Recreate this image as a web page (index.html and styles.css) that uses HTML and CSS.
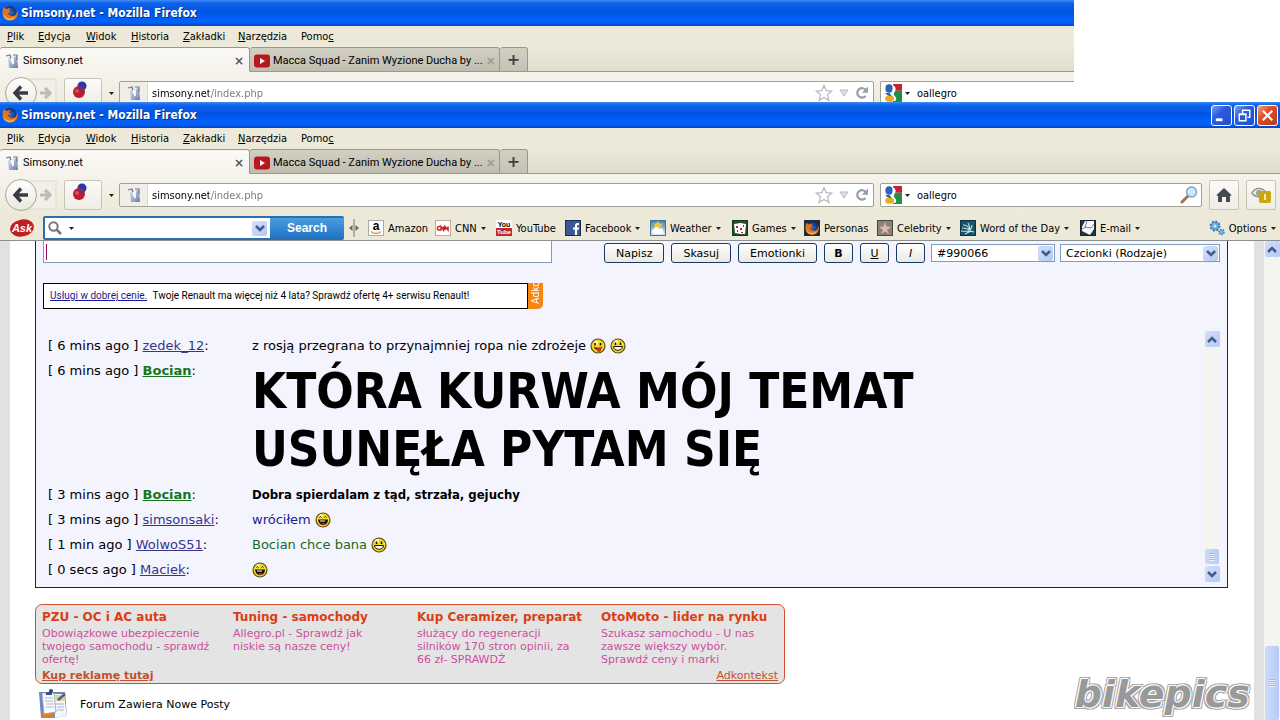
FILE: index.html
```html
<!DOCTYPE html>
<html lang="pl">
<head>
<meta charset="utf-8">
<title>Simsony.net - Mozilla Firefox</title>
<link rel="stylesheet" href="styles.css">
</head>
<body>
<svg class="sprite" aria-hidden="true">
  <defs>
    <radialGradient id="gFox"><stop offset="0" stop-color="#2a6fd0"/><stop offset="1" stop-color="#12326f"/></radialGradient>
    <linearGradient id="gSky" x2="0" y2="1"><stop offset="0" stop-color="#3f7fb0"/><stop offset="1" stop-color="#d5edfa"/></linearGradient>
    <linearGradient id="gNav" x2="0" y2="1"><stop offset="0" stop-color="#fff"/><stop offset="1" stop-color="#e9e7dd"/></linearGradient>
    <linearGradient id="gPage" x2="1" y2="1"><stop offset="0" stop-color="#dfe5f2"/><stop offset="1" stop-color="#6679a8"/></linearGradient>
    <symbol id="fox" viewBox="0 0 16 16"><circle cx="8" cy="7.5" r="6.5" fill="url(#gFox)"/><path d="M2 2C0 5 0 10 2 12.500c3 4 10 4 12.500 0 1.500-2.500 1.600-5 .8-7.500-.6 5-3 6.500-5.500 6-2.500-.3-4-1.600-4-3.500 1 .3 2 .2 3-.8L7 6C7 4.500 8 4 8.500 3.500 7 3 6 3.300 5 4 4 3.500 3 3.500 2 2z" fill="#e8741a"/><path d="M1.500 9c2 5 8 6 12 2-1 4-5 5-8 4s-4-3-4-6z" fill="#f9b23c"/></symbol>
    <symbol id="site" viewBox="0 0 16 16"><path d="M4 5l9-2 1 12H5z" fill="url(#gPage)"/><path d="M2 3l4-1 1 4M9 2h4v5" fill="none" stroke="#6b7891" stroke-width="1.200"/><path d="M7 5l2 6V4" fill="none" stroke="#fff" stroke-width="1.600"/></symbol>
    <symbol id="play" viewBox="0 0 16 13"><rect width="16" height="13" rx="3" fill="#b9171b"/><path d="M6 3.500v6l5-3z" fill="#fff"/></symbol>
    <symbol id="back" viewBox="0 0 52 36"><rect x="24" y="4" width="28" height="28" fill="#f1efe6" stroke="#dddacd"/><circle cx="17" cy="18" r="15.500" fill="url(#gNav)" stroke="#a8a69c"/><path d="M12 18h12M17 11.500L11 18l6 6.500" fill="none" stroke="#373c44" stroke-width="3.400"/><path d="M36 18h9M41 13l5 5-5 5" fill="none" stroke="#bcbcb7" stroke-width="3.200"/></symbol>
    <symbol id="balls" viewBox="0 0 16 18"><circle cx="10" cy="5" r="4.500" fill="#2a35b2"/><circle cx="7" cy="11" r="6" fill="#c01c2c"/><circle cx="9" cy="8" r="3" fill="#713071"/><circle cx="5" cy="10" r="2" fill="#e24d50"/></symbol>
    <symbol id="star" viewBox="0 0 18 18"><path d="M9 1.500l2.200 5.200 5.500.4-4.200 3.600 1.400 5.600L9 13.400l-4.900 2.900 1.400-5.600L1.300 7.100l5.500-.4z" fill="#fff" stroke="#b8bcc2" stroke-width="1.300"/></symbol>
    <symbol id="hollow" viewBox="0 0 10 8"><path d="M1 1h8L5 7z" fill="#dde0e4" stroke="#b4bac0"/></symbol>
    <symbol id="reload" viewBox="0 0 14 14"><path d="M10.500 10A4.700 4.700 0 1 1 11 4.500" fill="none" stroke="#989ea8" stroke-width="2.200"/><path d="M13 .5v6.300H6.800z" fill="#989ea8"/></symbol>
    <symbol id="goog" viewBox="0 0 16 16"><path d="M0 0h9v16H0z" fill="#fff"/><path d="M8 0h8v6H8z" fill="#cc2030"/><path d="M8 6h8v10H8z" fill="#1d9148"/><ellipse cx="4.500" cy="4" rx="3.300" ry="3.800" fill="#2b63b6"/><path d="M8 1c2 1 3 3 2 5S8 9 9 10s3 3 1 5H7z" fill="#fff"/><ellipse cx="5" cy="13" rx="4" ry="2.800" fill="#e9ad25"/><path d="M1 8h4l2 3-4-1z" fill="#2b63b6"/></symbol>
    <symbol id="lens" viewBox="0 0 18 18"><path d="M2 16l6-6" stroke="#b07046" stroke-width="3" stroke-linecap="round"/><circle cx="11.500" cy="6" r="5" fill="#cfe7fa" stroke="#7e9fc4" stroke-width="1.400"/></symbol>
    <symbol id="home" viewBox="0 0 16 14"><path d="M8 0l8 7.500h-2V14h-4V9H6v5H2V7.500H0z" fill="#44494f"/></symbol>
    <symbol id="eye" viewBox="0 0 20 18"><path d="M1 7c3-6 11-6 14 0-3 5-11 5-14 0z" fill="#eeeede" stroke="#95978b" stroke-width="1.500"/><circle cx="8" cy="7" r="3" fill="#9ca194"/><rect x="8" y="5" width="12" height="12" rx="2" fill="#cda60c"/><path d="M14 8v6" stroke="#fff" stroke-width="1.500"/></symbol>
    <symbol id="ask" viewBox="0 0 24 18"><ellipse cx="12" cy="9" rx="12" ry="8.500" fill="#bf1d20" transform="rotate(-10 12 9)"/><text x="12" y="13" text-anchor="middle" font-family="Liberation Sans" font-size="11" font-weight="bold" font-style="italic" fill="#fff">Ask</text></symbol>
    <symbol id="glass" viewBox="0 0 14 14"><circle cx="5.500" cy="5.500" r="4.200" fill="none" stroke="#777" stroke-width="2"/><path d="M8.500 8.500L13 13" stroke="#777" stroke-width="2.500"/></symbol>
    <symbol id="split" viewBox="0 0 10 18"><path d="M5 0v18" stroke="#77756c"/><path d="M0 9l3.500-3v6zM10 9L6.500 6v6z" fill="#66645c"/></symbol>
    <symbol id="amazon" viewBox="0 0 16 16"><rect x=".5" y=".5" width="15" height="15" fill="#fff" stroke="#aaa"/><text x="8" y="10" text-anchor="middle" font-family="Liberation Sans" font-size="12" font-weight="bold">a</text><path d="M3 11.500c3 2.500 7 2.500 10 0" fill="none" stroke="#ef9a1c" stroke-width="1.500"/></symbol>
    <symbol id="cnn" viewBox="0 0 16 16"><rect x=".5" y=".5" width="15" height="15" fill="#fff" stroke="#c4a8a4"/><path d="M5 6.500H3.500c-1.500 0-1.500 3.500 0 3.500H6V6.500l2.500 3.500V6.500M10 10V6.500l3 3.500V6.500" fill="none" stroke="#d02020" stroke-width="1.500"/></symbol>
    <symbol id="you" viewBox="0 0 16 16"><rect width="16" height="16" fill="#fff"/><path d="M0 8h16v8H0z" fill="#c4282c"/><text x="8" y="7" text-anchor="middle" font-family="Liberation Sans" font-size="7" font-weight="bold">You</text><text x="8" y="14" text-anchor="middle" font-family="Liberation Sans" font-size="6" font-weight="bold" fill="#fff">Tube</text></symbol>
    <symbol id="fb" viewBox="0 0 16 16"><rect x=".5" y=".5" width="15" height="15" fill="#3c5795" stroke="#1b2b55"/><path d="M14 4h-1.500Q11 4 11 6v9M8 8.500h6" fill="none" stroke="#fff" stroke-width="2.200"/></symbol>
    <symbol id="weather" viewBox="0 0 16 16"><rect x=".5" y=".5" width="15" height="15" fill="url(#gSky)" stroke="#47718c"/><circle cx="8" cy="6" r="3.500" fill="#e9c64b"/><path d="M8 1v2M3 3l2 2M13 3l-2 2" stroke="#e9c64b"/><path d="M3 13c-2-1-1-4 1-4 1-3 5-2 5 0 3-2 5 0 4 2 2 1 0 3-1 3H4z" fill="#fff"/></symbol>
    <symbol id="games" viewBox="0 0 16 16"><rect x=".5" y=".5" width="15" height="15" fill="#284f2b" stroke="#173519"/><path d="M2 4l7-1 1 11-7-1zM8 3l6 1-1 10H7z" fill="#fff"/><path d="M4 6h2v2H4zM8 8h2v2H8zM11 5h1v2h-1zM9 12h2v1H9zM5 10h1v2H5z" fill="#bf2431"/></symbol>
    <symbol id="personas" viewBox="0 0 16 16"><rect width="16" height="16" fill="#202d3e"/><use href="#fox" x="1" y="1" width="14" height="14"/></symbol>
    <symbol id="celeb" viewBox="0 0 16 16"><rect x=".5" y=".5" width="15" height="15" fill="#89817a" stroke="#4a4542"/><path d="M8 2l1.500 4.500L14 7l-4 3 2 4-4-2.500L4 14l2-4-4-3 4.500-.5z" fill="#e4b9aa"/></symbol>
    <symbol id="word" viewBox="0 0 16 16"><rect x=".5" y=".5" width="15" height="15" fill="#145466" stroke="#0b3440"/><path d="M1 11c5 1 8-1 13 1M3 5c4 0 5 2 7 5M8 3c1 2 2 4 2 7M12 5c0 2-1 4-2 5M2 8c3 0 6 1 8 2M5 14c2-1 4-2 6-3" fill="none" stroke="#c9e1e2" stroke-width="1.100"/></symbol>
    <symbol id="mail" viewBox="0 0 16 16"><rect x=".5" y=".5" width="15" height="15" fill="#26353f" stroke="#17222a"/><path d="M5 1h9v8l-4 6-8-4V7z" fill="#f7fafb"/><path d="M7 1l-2 6 6 1 3-4M2 9l4-2" fill="none" stroke="#71838d"/></symbol>
    <symbol id="gears" viewBox="0 0 16 16"><circle cx="6" cy="6" r="4.500" fill="#6ca6da" stroke="#357ab9" stroke-width="2" stroke-dasharray="2 1.500"/><circle cx="6" cy="6" r="1.500" fill="#dbeaf7"/><circle cx="12.500" cy="12" r="2.500" fill="#7fb2df" stroke="#3d7fba" stroke-width="1.500" stroke-dasharray="1.500 1"/></symbol>
    <symbol id="chev" viewBox="0 0 10 7"><path d="M1 1l4 4 4-4" fill="none" stroke="#45598a" stroke-width="2.500"/></symbol>
    <symbol id="caret" viewBox="0 0 5 3"><path d="M0 0h5L2.500 3z" fill="#222"/></symbol>
    <symbol id="tongue" viewBox="0 0 16 16"><circle cx="8" cy="8" r="7" fill="#f5d927" stroke="#5d4b12" stroke-width="1.200"/><circle cx="6" cy="5" r="2" fill="#fff8b5"/><path d="M5 5v2.500M10.500 5v2.500" stroke="#111" stroke-width="1.600"/><path d="M3.500 8.500c1 1.600 8 1.600 9 0-1 3-3 3.500-4.500 3.500s-4-1-4.500-3.500z" fill="#3c1506"/><path d="M7 10h4v3q-2 2-4 0z" fill="#d72822"/></symbol>
    <symbol id="grin" viewBox="0 0 16 16"><circle cx="8" cy="8" r="7" fill="#f5d927" stroke="#5d4b12" stroke-width="1.200"/><circle cx="6" cy="4" r="2" fill="#fff8b5"/><path d="M5.500 4.500v2.500M10.500 4.500v2.500" stroke="#111" stroke-width="1.500"/><path d="M3.500 8.500h9c0 5-9 5-9 0z" fill="#fff" stroke="#16120a"/></symbol>
    <symbol id="laugh" viewBox="0 0 16 16"><circle cx="8" cy="8" r="7" fill="#f5d927" stroke="#5d4b12" stroke-width="1.200"/><circle cx="6" cy="3.500" r="1.500" fill="#fff8b5"/><path d="M4.500 5.500l1-1 1 1M9.500 5.500l1-1 1 1" fill="none" stroke="#111"/><path d="M3 7.500h10c0 7-9 8-10 0z" fill="#16110c"/><path d="M5 8.500h5v1H5z" fill="#fff"/><ellipse cx="8.500" cy="12" rx="2" ry="1" fill="#b92a20"/></symbol>
    <symbol id="forum" viewBox="0 0 30 30"><path d="M1 3h15v26H3z" fill="#6e87ba"/><path d="M3 24l12-2v7H3z" fill="#dd7c28"/><path d="M15 3h12l2 24-13 2z" fill="#7185ab"/><path d="M16 5h10l3 22-12 2z" fill="#f5f6fb"/><path d="M17 6h9l1 6h-9z" fill="#ddd98c"/><path d="M4 4h12l2 19-12 2z" fill="#fbfbff" stroke="#9babc9"/><path d="M7 9h8M7 12h8M8 15h8M8 18h8M18 15h8M19 18h7M19 21h7" stroke="#a8b2c6"/><path d="M20 11l7-6" stroke="#4a6196" stroke-width="2.500"/><path d="M8 3h6v3H8z" fill="#34528e"/><circle cx="13" cy="2" r="2" fill="#29467f"/></symbol>
  </defs>
</svg>

<section class="window window-behind">
  <header class="titlebar"><svg class="i16"><use href="#fox"/></svg><span>Simsony.net - Mozilla Firefox</span></header>
  <nav class="menubar"><a href="#"><u>P</u>lik</a><a href="#"><u>E</u>dycja</a><a href="#"><u>W</u>idok</a><a href="#"><u>H</u>istoria</a><a href="#"><u>Z</u>akładki</a><a href="#"><u>N</u>arzędzia</a><a href="#">Pomo<u>c</u></a></nav>
  <div class="tabs">
    <div class="tab active"><svg class="i16"><use href="#site"/></svg><span>Simsony.net</span><button class="close" aria-label="Zamknij kartę">×</button></div>
    <div class="tab"><svg class="i16"><use href="#play"/></svg><span>Macca Squad - Zanim Wyzione Ducha by ...</span><button class="close" aria-label="Zamknij kartę">×</button></div>
    <button class="newtab" aria-label="Nowa karta">+</button>
  </div>
  <div class="navbar">
    <button class="backfwd" aria-label="Wstecz"><svg><use href="#back"/></svg></button>
    <button class="toolbtn wide" aria-label="Dodatek"><svg class="balls"><use href="#balls"/></svg></button>
    <svg class="caret"><use href="#caret"/></svg>
    <div class="field address"><span class="ident"><svg class="i16"><use href="#site"/></svg></span><input aria-label="Adres" value="simsony.net/index.php"><svg class="i18"><use href="#star"/></svg><svg class="hollow"><use href="#hollow"/></svg><svg class="reload"><use href="#reload"/></svg></div>
    <div class="field find"><svg class="i18"><use href="#goog"/></svg><svg class="caret"><use href="#caret"/></svg><input aria-label="Szukaj" value="oallegro"></div>
  </div>
</section>

<section class="window window-front">
  <header class="titlebar"><svg class="i16"><use href="#fox"/></svg><span>Simsony.net - Mozilla Firefox</span>
    <div class="winbtns">
      <button aria-label="Minimalizuj"><svg viewBox="0 0 20 20"><path d="M4 13h7v3H4z" fill="#fff"/></svg></button>
      <button aria-label="Przywróć"><svg viewBox="0 0 20 20"><path d="M8 8V4.500h7.500V12H13" fill="none" stroke="#fff" stroke-width="1.500"/><path d="M4.500 8.500h7v7h-7zM4 9h8" fill="none" stroke="#fff" stroke-width="1.500"/></svg></button>
      <button class="x" aria-label="Zamknij"><svg viewBox="0 0 20 20"><path d="M5 5l10 10M15 5L5 15" stroke="#fff" stroke-width="2.200"/></svg></button>
    </div>
  </header>
  <nav class="menubar"><a href="#"><u>P</u>lik</a><a href="#"><u>E</u>dycja</a><a href="#"><u>W</u>idok</a><a href="#"><u>H</u>istoria</a><a href="#"><u>Z</u>akładki</a><a href="#"><u>N</u>arzędzia</a><a href="#">Pomo<u>c</u></a></nav>
  <div class="tabs">
    <div class="tab active"><svg class="i16"><use href="#site"/></svg><span>Simsony.net</span><button class="close" aria-label="Zamknij kartę">×</button></div>
    <div class="tab"><svg class="i16"><use href="#play"/></svg><span>Macca Squad - Zanim Wyzione Ducha by ...</span><button class="close" aria-label="Zamknij kartę">×</button></div>
    <button class="newtab" aria-label="Nowa karta">+</button>
  </div>
  <div class="navbar">
    <button class="backfwd" aria-label="Wstecz"><svg><use href="#back"/></svg></button>
    <button class="toolbtn wide" aria-label="Dodatek"><svg class="balls"><use href="#balls"/></svg></button>
    <svg class="caret"><use href="#caret"/></svg>
    <div class="field address"><span class="ident"><svg class="i16"><use href="#site"/></svg></span><input aria-label="Adres" value="simsony.net/index.php"><svg class="i18"><use href="#star"/></svg><svg class="hollow"><use href="#hollow"/></svg><svg class="reload"><use href="#reload"/></svg></div>
    <div class="field find"><svg class="i18"><use href="#goog"/></svg><svg class="caret"><use href="#caret"/></svg><input aria-label="Szukaj" value="oallegro"><svg class="i18"><use href="#lens"/></svg></div>
    <button class="toolbtn home" aria-label="Strona startowa"><svg class="i16"><use href="#home"/></svg></button>
    <button class="toolbtn" aria-label="Ochrona"><svg class="eye"><use href="#eye"/></svg></button>
  </div>
  <div class="askbar">
    <svg class="ask"><use href="#ask"/></svg>
    <div class="asksearch">
      <div class="askinput"><svg class="i14"><use href="#glass"/></svg><svg class="caret"><use href="#caret"/></svg><input aria-label="Ask"><span class="drop"><svg><use href="#chev"/></svg></span></div>
      <button>Search</button>
    </div>
    <svg class="split"><use href="#split"/></svg>
    <nav class="links">
      <a href="#"><svg class="i16"><use href="#amazon"/></svg>Amazon</a>
      <a href="#"><svg class="i16"><use href="#cnn"/></svg>CNN<svg class="caret"><use href="#caret"/></svg></a>
      <a href="#"><svg class="i16"><use href="#you"/></svg>YouTube</a>
      <a href="#"><svg class="i16"><use href="#fb"/></svg>Facebook<svg class="caret"><use href="#caret"/></svg></a>
      <a href="#"><svg class="i16"><use href="#weather"/></svg>Weather<svg class="caret"><use href="#caret"/></svg></a>
      <a href="#"><svg class="i16"><use href="#games"/></svg>Games<svg class="caret"><use href="#caret"/></svg></a>
      <a href="#"><svg class="i16"><use href="#personas"/></svg>Personas</a>
      <a href="#"><svg class="i16"><use href="#celeb"/></svg>Celebrity<svg class="caret"><use href="#caret"/></svg></a>
      <a href="#"><svg class="i16"><use href="#word"/></svg>Word of the Day<svg class="caret"><use href="#caret"/></svg></a>
      <a href="#"><svg class="i16"><use href="#mail"/></svg>E-mail<svg class="caret"><use href="#caret"/></svg></a>
    </nav>
    <a class="options" href="#"><svg class="i16"><use href="#gears"/></svg>Options<svg class="caret"><use href="#caret"/></svg></a>
  </div>
</section>

<div class="viewport">
  <main class="page">
    <section class="shout">
      <form class="compose">
        <input class="message" aria-label="Wiadomość">
        <div class="btns"><button type="button">Napisz</button><button type="button">Skasuj</button><button type="button">Emotionki</button><button class="fmt" type="button"><b>B</b></button><button class="fmt" type="button"><u>U</u></button><button class="fmt" type="button"><i>I</i></button></div>
        <div class="sel color"><select aria-label="Kolor"><option>#990066</option></select><span class="drop"><svg><use href="#chev"/></svg></span></div>
        <div class="sel"><select aria-label="Czcionka"><option>Czcionki (Rodzaje)</option></select><span class="drop"><svg><use href="#chev"/></svg></span></div>
      </form>
      <div class="banner"><p><a href="#">Usługi w dobrej cenie.</a> Twoje Renault ma więcej niż 4 lata? Sprawdź ofertę 4+ serwisu Renault!</p><span class="adk">Adko</span></div>
      <div class="chat">
        <div class="log">
          <div class="row"><div>[ 6 mins ago ] <a href="#">zedek_12</a>:</div><div>z rosją przegrana to przynajmniej ropa nie zdrożeje <svg class="smile"><use href="#tongue"/></svg> <svg class="smile"><use href="#grin"/></svg></div></div>
          <div class="row"><div>[ 6 mins ago ] <a class="mod" href="#">Bocian</a>:</div><div class="huge">KTÓRA KURWA MÓJ TEMAT<br>USUNĘŁA PYTAM SIĘ</div></div>
          <div class="row"><div>[ 3 mins ago ] <a class="mod" href="#">Bocian</a>:</div><div class="strong">Dobra spierdalam z tąd, strzała, gejuchy</div></div>
          <div class="row"><div>[ 3 mins ago ] <a href="#">simsonsaki</a>:</div><div class="navy">wróciłem <svg class="smile"><use href="#laugh"/></svg></div></div>
          <div class="row"><div>[ 1 min ago ] <a href="#">WolwoS51</a>:</div><div class="green">Bocian chce bana <svg class="smile"><use href="#grin"/></svg></div></div>
          <div class="row"><div>[ 0 secs ago ] <a href="#">Maciek</a>:</div><div><svg class="smile"><use href="#laugh"/></svg></div></div>
        </div>
        <div class="bar"><span class="drop up"><svg><use href="#chev"/></svg></span><span class="space"></span><span class="thumb"></span><span class="drop"><svg><use href="#chev"/></svg></span></div>
      </div>
    </section>
    <section class="ads">
      <div class="cols">
        <div><h3>PZU - OC i AC auta</h3><p>Obowiązkowe ubezpieczenie<br>twojego samochodu - sprawdź<br>ofertę!</p></div>
        <div><h3>Tuning - samochody</h3><p>Allegro.pl - Sprawdź jak<br>niskie są nasze ceny!</p></div>
        <div><h3>Kup Ceramizer, preparat</h3><p>służący do regeneracji<br>silników 170 stron opinii, za<br>66 zł- SPRAWDŹ</p></div>
        <div><h3>OtoMoto - lider na rynku</h3><p>Szukasz samochodu - U nas<br>zawsze większy wybór.<br>Sprawdź ceny i marki</p></div>
      </div>
      <footer><a class="buy" href="#">Kup reklamę tutaj</a><a href="#">Adkontekst</a></footer>
    </section>
    <div class="legend"><svg><use href="#forum"/></svg><span>Forum Zawiera Nowe Posty</span><span class="watermark">bikepics</span></div>
  </main>
  <div class="bar main"><span class="drop up"><svg><use href="#chev"/></svg></span><span class="space"></span><span class="thumb"></span></div>
</div>
</body>
</html>
```
FILE: styles.css
```css
* { box-sizing: border-box; }
body { margin: 0; height: 100vh; overflow: hidden; display: flex; flex-direction: column; background: #fff; font-family: "DejaVu Sans Condensed", "DejaVu Sans", sans-serif; font-size: 11px; color: #000; }
button, input, select { font: inherit; color: inherit; margin: 0; padding: 0; border: 0; background: none; }
a { color: inherit; text-decoration: none; }
svg { flex: none; display: block; }
.sprite { position: absolute; width: 0; height: 0; }
.i14 { width: 14px; height: 14px; }
.i16 { width: 16px; height: 16px; }
.i18 { width: 18px; height: 18px; }
.caret { width: 5px; height: 3px; }

.window { flex: none; background: #ece9d8; }
.window-behind { height: 102px; overflow: hidden; margin-right: 206px; }
.window-front { border-bottom: 1px solid #8e8f8f; }

.titlebar { height: 26px; display: flex; align-items: center; gap: 3px; padding: 0 2px; background: linear-gradient(#3d8df5, #0f62e8 12%, #0054e3 45%, #0062fb 75%, #0060f5 88%, #0a3fc0); color: #fff; font: bold 12px "DejaVu Sans Condensed", "DejaVu Sans", sans-serif; text-shadow: 1px 1px #0a2a80; }
.winbtns { margin-left: auto; display: flex; gap: 2px; }
.winbtns button { width: 21px; height: 21px; border: 1px solid #fff; border-radius: 3px; background: linear-gradient(135deg, #7b9df0, #2a5bdc 40%, #2450c8); }
.winbtns .x { background: linear-gradient(135deg, #f0a184, #dc4f26 40%, #b93a18); }

.menubar { height: 21px; display: grid; grid-template-columns: 31px 48px 45px 52px 55px 63px auto; align-items: center; padding-left: 7px; }

.tabs { height: 25px; display: flex; background: linear-gradient(#ece9d8, #e0ddcc); border-bottom: 1px solid #9c9a8f; }
.tab { width: 250px; height: 25px; display: flex; align-items: center; gap: 3px; padding: 2px 4px 0; border: 1px solid #9a988c; border-left: 0; border-radius: 3px 3px 0 0; background: linear-gradient(#d2cfc3, #bfbcb0); white-space: nowrap; font-family: Roboto, sans-serif; }
.tab.active { background: linear-gradient(#fbfaf6, #f5f3ec); border-bottom-color: #f5f3ec; }
.close { margin-left: auto; width: 12px; font: bold 12px/12px "DejaVu Sans", sans-serif; color: #555; }
.tab:not(.active) .close { color: #999; }
.newtab { width: 28px; height: 25px; border: 1px solid #9a988c; border-left: 0; border-radius: 3px 3px 0 0; background: linear-gradient(#d2cfc3, #c4c1b5); font: bold 16px/20px "DejaVu Sans", sans-serif; color: #3c4246; }

.navbar { height: 42px; display: flex; align-items: center; padding: 0 4px 0 3px; background: linear-gradient(#f5f3ec, #ece9d8); }
.backfwd, .backfwd svg { width: 54px; height: 36px; }
.toolbtn { width: 30px; height: 30px; display: flex; align-items: center; justify-content: center; border: 1px solid #c6c4b8; border-radius: 2px; background: linear-gradient(#fbfaf7, #efede4); }
.toolbtn.wide { width: 38px; margin: 0 7px; padding: 0 6px 6px 0; }
.toolbtn.home { margin: 0 7px; }
.balls { width: 16px; height: 18px; }
.eye { width: 20px; height: 18px; }
.field { height: 24px; display: flex; align-items: center; background: #fff; border: 1px solid #a3a196; border-radius: 2px; }
.field input { flex: 1; min-width: 0; }
.field.address { flex: 1; margin: 0 6px 0 5px; padding-right: 4px; gap: 6px; }
.address input { background: linear-gradient(90deg, #000 57px, #777 57px); background-clip: text; -webkit-background-clip: text; color: transparent; }
.ident { width: 28px; height: 22px; display: flex; align-items: center; justify-content: center; background: #f0eee6; border-right: 1px solid #dcdad0; margin-right: -2px; }
.hollow { width: 10px; height: 8px; }
.reload { width: 14px; height: 14px; }
.field.find { width: 322px; padding: 0 3px; gap: 3px; }
.field.find input { padding-left: 4px; }
.window-behind .field.find { width: 200px; margin-right: -10px; border-right: 0; }

.askbar { height: 24px; display: flex; align-items: center; padding: 0 4px 0 10px; }
.ask { width: 24px; height: 18px; }
.asksearch { width: 301px; height: 24px; display: flex; margin: 0 5px 0 9px; background: #2c6fb0; padding: 2px 0 2px 2px; border-radius: 2px; }
.askinput { flex: 1; display: flex; align-items: center; gap: 7px; padding: 0 3px; background: #fff; }
.askinput input { flex: 1; min-width: 0; }
.asksearch button { width: 74px; color: #fff; font: bold 12px "Liberation Sans", sans-serif; background: linear-gradient(#4c9ce0, #1f74c6); }
.split { width: 10px; height: 18px; margin-right: 9px; }
.links { flex: 1; display: grid; grid-template-columns: 67px 61px 69px 85px 82px 72px 73px 83px 120px auto; }
.links a, .options { display: flex; align-items: center; gap: 4px; white-space: nowrap; }

.drop { flex: none; width: 15px; height: 15px; display: flex; align-items: center; justify-content: center; border-radius: 2px; background: linear-gradient(135deg, #d3e0fd, #b4c8f6); }
.drop svg { width: 10px; height: 7px; }
.drop.up svg { transform: rotate(180deg); }

.viewport { flex: 1; min-height: 0; display: flex; }
.page { flex: 1; min-width: 0; overflow: hidden; border: solid #e1e1e1; border-width: 0 10px; padding: 0 26px 0 25px; font-family: "DejaVu Sans", sans-serif; }
.shout { background: #f4f4fe; border: 1px solid #1a1a78; border-top: 0; padding: 0 7px 5px; }
.compose { display: flex; align-items: center; height: 24px; font-size: 11px; }
.message { align-self: flex-start; width: 509px; height: 22px; margin-right: auto; background: linear-gradient(#990066, #990066) 2px 3px / 1px 16px no-repeat #fff; border: 1px solid #7f9db9; border-top: 0; }
.btns { display: flex; gap: 7px; margin-right: 6px; }
.btns button { height: 20px; padding: 0 11px; border: 1px solid #153a66; border-radius: 3px; background: linear-gradient(#fff, #eae8e0); }
.btns .fmt { width: 29px; padding: 0; }
.sel { display: flex; align-items: center; width: 160px; height: 18px; padding-right: 1px; background: #fff; border: 1px solid #7f9db9; }
.sel.color { width: 124px; margin-right: 5px; }
.sel select { flex: 1; min-width: 0; appearance: none; padding-left: 5px; }
.banner { height: 26px; display: flex; margin: 18px 0 22px; font: 10px Roboto, sans-serif; }
.banner p { width: 485px; margin: 0; padding: 0 6px; line-height: 24px; background: #fff; border: 1px solid #000; white-space: nowrap; }
.banner a { color: #1a1a90; text-decoration: underline; margin-right: 3px; }
.adk { width: 15px; overflow: hidden; writing-mode: vertical-rl; transform: rotate(180deg); background: #f58612; color: #fff; font-size: 10px; line-height: 15px; border-radius: 5px 0 0; padding-top: 5px; }
.chat { display: flex; }
.log { flex: 1; padding: 2px 0 0 5px; font-size: 13px; }
.row { display: grid; grid-template-columns: 204px 1fr; line-height: 25px; }
.row a { color: #35358c; text-decoration: underline; }
.row .mod { color: #15751d; font-weight: bold; }
.row .huge { font: bold 49px/58px "DejaVu Sans Condensed", "DejaVu Sans", sans-serif; padding: 5px 0 3px; }
.row .strong { font-weight: bold; font-family: "DejaVu Sans Condensed", "DejaVu Sans", sans-serif; }
.row .navy { color: #1c1c8c; }
.row .green { color: #1a6a22; }
.smile { display: inline-block; width: 16px; height: 16px; vertical-align: -4px; }
.bar { flex: none; width: 16px; display: flex; flex-direction: column; align-items: center; gap: 2px; background: #f4f4f0; }
.bar .drop { height: 16px; }
.space { flex: 1; }
.thumb { width: 14px; height: 15px; border-radius: 2px; background: repeating-linear-gradient(#9fb5ee 0 1px, #e8effe 1px 2px) center / 6px 8px no-repeat, linear-gradient(90deg, #cbdafd, #b7caf8); }
.bar.main .thumb { height: 74px; }

.ads { width: 750px; margin-top: 16px; padding: 5px 6px 0; background: #e4e4e4; border: 1px solid #d2502c; border-radius: 7px; font-size: 11px; line-height: 13px; color: #cd4f9f; }
.cols { display: grid; grid-template-columns: 191px 184px 184px auto; height: 59px; white-space: nowrap; }
.ads h3 { margin: 0 0 2px; font-size: 12px; line-height: 15px; color: #d93f12; }
.ads p { margin: 0; }
.ads footer { display: flex; justify-content: space-between; color: #c1502f; line-height: 14px; }
.ads footer a { text-decoration: underline; }
.buy { font-weight: bold; }
.legend { display: flex; align-items: center; height: 40px; padding-left: 3px; font-size: 11px; }
.legend svg { width: 30px; height: 30px; margin-right: 12px; }
.watermark { align-self: flex-start; margin: 0 -22px 0 auto; font: italic bold 38px/20px "DejaVu Sans", sans-serif; color: #999; text-shadow: 1px 0 #fff, -1px 0 #fff, 0 1px #fff, 0 -1px #fff, 1px 1px #fff, -1px -1px #fff, 2px 0 #aaa, -2px 0 #aaa, 0 2px #aaa, 0 -2px #aaa, 2px 2px #aaa, -2px -2px #aaa, 2px -2px #aaa, -2px 2px #aaa; }
```
